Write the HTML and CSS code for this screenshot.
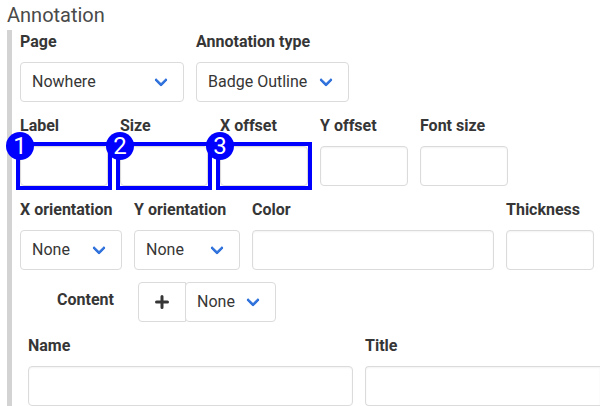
FILE: index.html
```html
<!DOCTYPE html>
<html lang="en">
<head>
<meta charset="utf-8">
<title>Annotation</title>
<link rel="stylesheet" href="styles.css">
</head>
<body>
<main class="annotation">
  <h1 class="heading">Annotation</h1>
  <div class="group">
    <div class="row">
      <div class="field w-page"><span class="label">Page</span><div class="select">Nowhere</div></div>
      <div class="field w-type"><span class="label">Annotation type</span><div class="select">Badge Outline</div></div>
    </div>
    <div class="row">
      <div class="field w-small"><span class="label">Label</span><div class="input"><div class="outline"><span class="badge">1</span></div></div></div>
      <div class="field w-small"><span class="label">Size</span><div class="input"><div class="outline"><span class="badge">2</span></div></div></div>
      <div class="field w-small"><span class="label">X offset</span><div class="input"><div class="outline"><span class="badge">3</span></div></div></div>
      <div class="field w-small"><span class="label">Y offset</span><div class="input"></div></div>
      <div class="field w-small"><span class="label">Font size</span><div class="input"></div></div>
    </div>
    <div class="row">
      <div class="field w-xori"><span class="label">X orientation</span><div class="select">None</div></div>
      <div class="field w-yori"><span class="label">Y orientation</span><div class="select">None</div></div>
      <div class="field w-color"><span class="label">Color</span><div class="input"></div></div>
      <div class="field w-small"><span class="label">Thickness</span><div class="input"></div></div>
    </div>
    <div class="row content-row">
      <span class="label content-label">Content</span>
      <div class="addons">
        <div class="add-button">
          <svg class="plus" viewBox="0 0 14 14"><path d="M7 1.5V12.5M1.5 7H12.5" /></svg>
        </div>
        <div class="select content-select">None</div>
      </div>
    </div>
    <div class="row nested">
      <div class="field w-name"><span class="label">Name</span><div class="input"></div></div>
      <div class="field w-title"><span class="label">Title</span><div class="input input-open"></div></div>
    </div>
  </div>
</main>
</body>
</html>
```
FILE: styles.css
```css
*,
*::before,
*::after { box-sizing: border-box; }

body {
  margin: 0;
  background: #fff;
  color: #363636;
  font: 16px/24px Roboto, "Liberation Sans", sans-serif;
}

.annotation {
  height: 406px;
  padding-left: 7px;
  overflow: hidden;
}

.heading {
  margin: 0;
  height: 30px;
  font-size: 20px;
  font-weight: 400;
  line-height: 30px;
  color: #4a4a4a;
}

.group {
  height: 376px;
  padding-left: 8px;
  border-left: 5px solid lightgray;
}

.row {
  display: flex;
  gap: 12px;
  margin-bottom: 12px;
}

.field { flex: none; }
.w-page { width: 164px; }
.w-type { width: 153px; }
.w-small { width: 88px; }
.w-xori { width: 102px; }
.w-yori { width: 106px; }
.w-color { width: 242px; }
.w-name { width: 325px; }
.w-title { flex: 1; }

.label {
  display: block;
  margin-bottom: 8px;
  font-weight: 700;
  white-space: nowrap;
}

.input,
.select,
.add-button {
  position: relative;
  height: 40px;
  border: 1px solid #dbdbdb;
  border-radius: 4px;
  background: #fff;
}

.input { box-shadow: inset 0 1px 2px rgba(10, 10, 10, 0.05); }

.input-open {
  border-right: 0;
  border-radius: 4px 0 0 4px;
}

.select {
  padding: 7px 0 7px 11px;
  white-space: nowrap;
}

.select::after {
  content: "";
  position: absolute;
  top: 50%;
  right: 17px;
  width: 10px;
  height: 10px;
  margin-top: -7px;
  border: 3px solid #3273dc;
  border-top: 0;
  border-right: 0;
  border-radius: 2px;
  transform: rotate(-45deg);
}

.content-row { padding-left: 37px; gap: 0; }
.content-label { width: 81px; margin: 6px 0 0; }
.addons { display: flex; }

.add-button {
  display: flex;
  align-items: center;
  justify-content: center;
  width: 48px;
  border-radius: 4px 0 0 4px;
}

.plus {
  width: 14px;
  height: 14px;
  fill: none;
  stroke: #363636;
  stroke-width: 3;
  stroke-linecap: round;
}

.content-select { width: 91px; margin-left: -1px; }
.nested { padding-left: 8px; }

/* Numbered highlight drawn around an input */
.outline {
  position: absolute;
  inset: -5px;
  z-index: 1;
  border: 4px solid #00f;
}

.badge {
  position: absolute;
  top: -14px;
  left: -14px;
  width: 28px;
  height: 28px;
  border-radius: 50%;
  background: #00f;
  color: #fff;
  font-size: 24px;
  line-height: 28px;
  text-align: center;
}
```
